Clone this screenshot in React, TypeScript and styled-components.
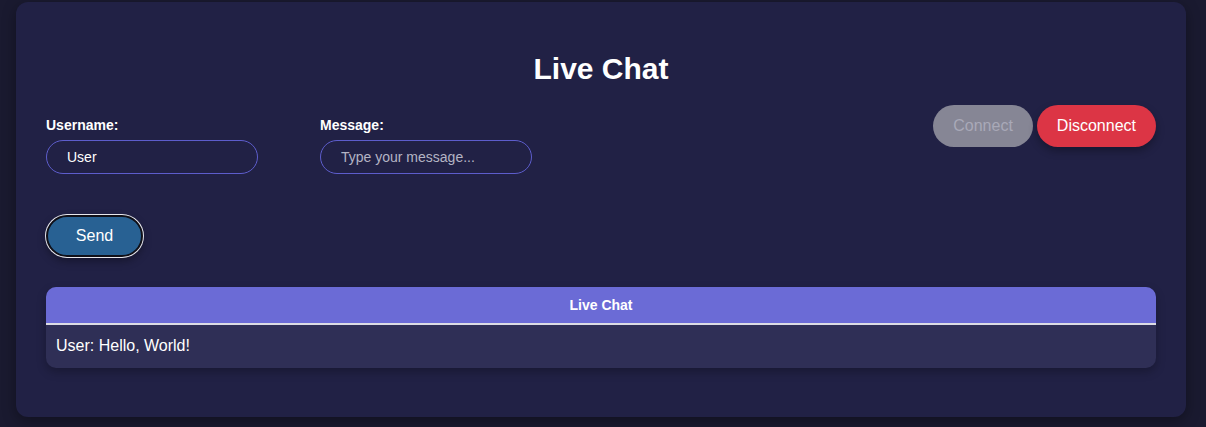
import React from "react";
import styled, { createGlobalStyle } from "styled-components";

const Global = createGlobalStyle`
  html, body { margin: 0; padding: 0; background: #1a1a30; }
  body { font-family: "Liberation Sans", Arial, sans-serif; color: #fff; }
  * { box-sizing: border-box; }
`;

const Page = styled.div`
  padding: 2px 20px 10px 16px;
`;

const Card = styled.div`
  background: #212145;
  border-radius: 12px;
  padding: 30px 30px 49px;
  box-shadow: 0 4px 14px rgba(0, 0, 0, 0.35);
`;

const Title = styled.h1`
  margin: 20px 0 19px;
  font-size: 30px;
  font-weight: 700;
  text-align: center;
  line-height: 34px;
`;

const ControlsRow = styled.div`
  display: flex;
  justify-content: space-between;
  align-items: flex-start;
`;

const Fields = styled.div`
  display: flex;
  gap: 62px;
  padding-top: 12px;
`;

const Field = styled.div`
  display: flex;
  flex-direction: column;
  gap: 7px;
`;

const Label = styled.label`
  font-size: 14px;
  font-weight: 700;
  line-height: 16px;
`;

const Input = styled.input`
  width: 212px;
  height: 34px;
  border-radius: 17px;
  border: 1px solid #5d5dcc;
  background: transparent;
  color: #fff;
  font-family: "Liberation Sans", Arial, sans-serif;
  font-size: 14px;
  padding: 0 20px;
  outline: none;
  &::placeholder { color: #b4b4c4; }
`;

const ButtonGroup = styled.div`
  display: flex;
  gap: 4px;
`;

const PillButton = styled.button<{ $variant: "muted" | "danger" }>`
  height: 42px;
  padding: 0 20px;
  border: none;
  border-radius: 21px;
  font-family: "Liberation Sans", Arial, sans-serif;
  font-size: 16px;
  background: ${(p) => (p.$variant === "danger" ? "#dc3545" : "#868695")};
  color: ${(p) => (p.$variant === "danger" ? "#fff" : "#a9a9b8")};
  box-shadow: ${(p) => (p.$variant === "danger" ? "0 4px 8px rgba(0,0,0,0.3)" : "none")};
`;

const SendRow = styled.div`
  margin-top: 41px;
  display: flex;
`;

const SendButton = styled.button`
  width: 97px;
  height: 42px;
  border-radius: 21px;
  border: 2px solid #101018;
  background: #286193;
  color: #fff;
  font-family: "Liberation Sans", Arial, sans-serif;
  font-size: 16px;
  box-shadow: 0 0 0 1px #e8e8ee, 0 4px 8px rgba(0, 0, 0, 0.35);
`;

const ChatBox = styled.div`
  margin-top: 30px;
  border-radius: 10px;
  overflow: hidden;
  background: #2f2f56;
  box-shadow: 0 4px 10px rgba(0, 0, 0, 0.25);
`;

const ChatHeader = styled.div`
  background: #6b6bd6;
  text-align: center;
  font-size: 14px;
  font-weight: 700;
  line-height: 16px;
  padding: 10px 0;
  border-bottom: 2px solid #dcdce4;
`;

const Message = styled.div`
  font-size: 16px;
  line-height: 18px;
  padding: 12px 10px 13px;
`;

export default function App() {
  return (
    <Page>
      <Global />
      <Card>
        <Title>Live Chat</Title>
        <ControlsRow>
          <Fields>
            <Field>
              <Label>Username:</Label>
              <Input defaultValue="User" />
            </Field>
            <Field>
              <Label>Message:</Label>
              <Input placeholder="Type your message..." />
            </Field>
          </Fields>
          <ButtonGroup>
            <PillButton $variant="muted">Connect</PillButton>
            <PillButton $variant="danger">Disconnect</PillButton>
          </ButtonGroup>
        </ControlsRow>
        <SendRow>
          <SendButton>Send</SendButton>
        </SendRow>
        <ChatBox>
          <ChatHeader>Live Chat</ChatHeader>
          <Message>User: Hello, World!</Message>
        </ChatBox>
      </Card>
    </Page>
  );
}
